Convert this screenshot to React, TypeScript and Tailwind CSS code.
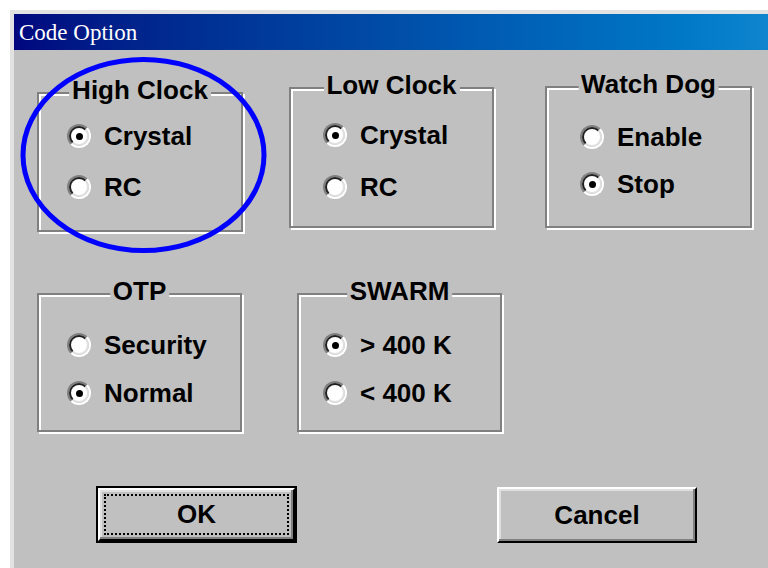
type Option = { label: string; checked?: boolean }

type Group = {
  title: string
  box: string
  body: string
  options: Option[]
}

const topRow: Group[] = [
  {
    title: 'High Clock',
    box: 'ml-[23px] mt-[6px] w-[206px] h-[140px]',
    body: 'pt-[28px] pl-[28px] gap-[23px]',
    options: [{ label: 'Crystal', checked: true }, { label: 'RC' }],
  },
  {
    title: 'Low Clock',
    box: 'ml-[46px] mt-[1px] w-[205px] h-[141px]',
    body: 'pt-[32px] pl-[32px] gap-[24px]',
    options: [{ label: 'Crystal', checked: true }, { label: 'RC' }],
  },
  {
    title: 'Watch Dog',
    box: 'ml-[51px] w-[207px] h-[142px]',
    body: 'pt-[35px] pl-[33px] gap-[19px]',
    options: [{ label: 'Enable' }, { label: 'Stop', checked: true }],
  },
]

const bottomRow: Group[] = [
  {
    title: 'OTP',
    box: 'ml-[23px] w-[205px] h-[139px]',
    body: 'pt-[36px] pl-[28px] gap-[20px]',
    options: [{ label: 'Security' }, { label: 'Normal', checked: true }],
  },
  {
    title: 'SWARM',
    box: 'ml-[55px] w-[205px] h-[139px]',
    body: 'pt-[36px] pl-[24px] gap-[20px]',
    options: [{ label: '> 400 K', checked: true }, { label: '< 400 K' }],
  },
]

function Radio({ checked }: { checked?: boolean }) {
  return (
    <div className="w-[24px] h-[24px] rounded-full border-2 border-t-[#808080] border-l-[#808080] border-b-white border-r-white">
      <div className="w-full h-full rounded-full border-2 border-t-[#202020] border-l-[#202020] border-b-[#dfdfdf] border-r-[#dfdfdf] bg-white flex items-center justify-center">
        {checked && <div className="w-[7px] h-[7px] rounded-full bg-black" />}
      </div>
    </div>
  )
}

function GroupBox({ group }: { group: Group }) {
  return (
    <div
      className={`relative shrink-0 border-2 border-[#808080] shadow-[2px_2px_0_#fff,inset_2px_2px_0_#fff] ${group.box}`}
    >
      <span className="absolute left-1/2 -translate-x-1/2 top-[-16px] px-[3px] bg-[#c0c0c0] leading-[25px] whitespace-nowrap">
        {group.title}
      </span>
      <div className={`flex flex-col ${group.body}`}>
        {group.options.map((opt) => (
          <div key={opt.label} className="flex items-center gap-[13px] h-[28px] whitespace-pre">
            <Radio checked={opt.checked} />
            <span className="leading-[28px]">{opt.label}</span>
          </div>
        ))}
      </div>
    </div>
  )
}

export default function App() {
  return (
    <div className="relative w-[768px] h-[568px] overflow-hidden bg-white pl-[10px] pt-[10px] flex flex-col font-['Liberation_Sans',Arial,sans-serif]">
      <div className="flex-1 flex flex-col border-l-4 border-t-4 border-[#e2e2e2] bg-[#c0c0c0]">
        {/* title bar */}
        <div className="h-[36px] shrink-0 flex items-center pl-[5px] bg-gradient-to-r from-[#00067f] to-[#0f85cf]">
          <span className="text-white text-[23px] font-['Liberation_Serif','Times_New_Roman',serif] leading-none">
            Code Option
          </span>
        </div>

        <div className="flex flex-col text-[26px] font-bold text-black">
          <div className="flex items-start pt-[36px]">
            {topRow.map((g) => (
              <GroupBox key={g.title} group={g} />
            ))}
          </div>

          <div className="flex items-start mt-[61px]">
            {bottomRow.map((g) => (
              <GroupBox key={g.title} group={g} />
            ))}
          </div>

          <div className="flex items-start mt-[54px]">
            <button className="ml-[82px] w-[201px] h-[57px] border-2 border-black bg-black p-0">
              <div className="w-full h-full border-2 border-t-white border-l-white border-b-black border-r-black shadow-[inset_-2px_-2px_0_#808080,inset_2px_2px_0_#dfdfdf] bg-[#c0c0c0] flex items-center justify-center p-[4px]">
                <div className="w-full h-full border-2 border-dotted border-black flex items-center justify-center">
                  OK
                </div>
              </div>
            </button>
            <button className="ml-[200px] mt-[1px] w-[200px] h-[56px] border-2 border-t-white border-l-white border-b-black border-r-black shadow-[inset_-2px_-2px_0_#808080,inset_2px_2px_0_#dfdfdf] bg-[#c0c0c0] flex items-center justify-center">
              Cancel
            </button>
          </div>
        </div>
      </div>

      {/* hand-drawn marker ring around the high clock group */}
      <svg className="absolute left-0 top-0 pointer-events-none" width="768" height="568">
        <ellipse cx="143.5" cy="155" rx="120.5" ry="95.5" fill="none" stroke="#0000ff" strokeWidth="5" />
      </svg>
    </div>
  )
}
